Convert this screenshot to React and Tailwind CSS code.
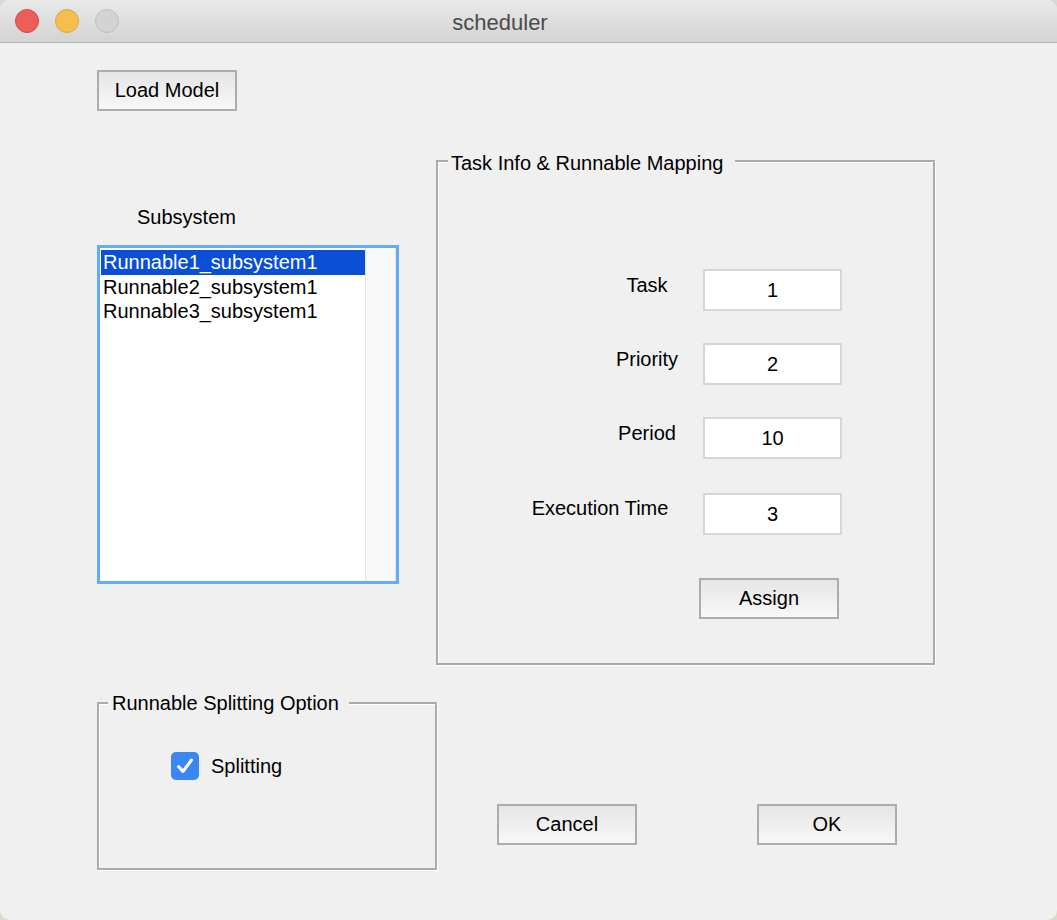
import React from "react";

const Btn = ({ children, className = "" }) => (
  <button
    className={`flex h-[41px] w-[140px] items-center justify-center border-2 border-[#acacac] bg-linear-to-b from-[#e5e5e5] to-[#f8f8f8] pb-[2px] text-[20px] leading-none text-black ${className}`}
  >
    {children}
  </button>
);

const Field = ({ value }) => (
  <div className="ml-[13px] flex h-[42px] w-[139px] items-center justify-center border-2 border-[#d6d6d6] bg-white pb-[1px] text-[20px] leading-none">
    {value}
  </div>
);

const rows = [
  { label: "Task", value: "1", box: "w-[86px] mt-[5px]", row: "mt-[96px]" },
  { label: "Priority", value: "2", box: "w-[86px] mt-[5px]", row: "mt-[32px]" },
  { label: "Period", value: "10", box: "w-[86px] mt-[5px]", row: "mt-[32px]" },
  { label: "Execution Time", value: "3", box: "w-[180px] mt-[4px]", row: "mt-[34px]" },
];

const items = ["Runnable1_subsystem1", "Runnable2_subsystem1", "Runnable3_subsystem1"];

export default function App() {
  return (
    <div className="min-h-screen bg-[#d9d9cd]">
      <div className="h-[920px] w-[1057px] overflow-hidden rounded-[10px] bg-[#f0f0f0] font-['Liberation_Sans',Arial,sans-serif] text-[20px] text-black">
        {/* title bar */}
        <div className="flex h-[43px] items-center border-b border-[#b2b2b2] bg-linear-to-b from-[#e9e9e9] to-[#d4d4d4]">
          <div className="flex w-[119px] items-center gap-[16px] pl-[15px]">
            <span className="h-6 w-6 rounded-full border border-[#d64a42] bg-[#ec5f58]" />
            <span className="h-6 w-6 rounded-full border border-[#daa53b] bg-[#f4bf4f]" />
            <span className="h-6 w-6 rounded-full border border-[#bdbdbd] bg-[#d3d3d3]" />
          </div>
          <div className="flex-1 pr-[176px] pt-[3px] text-center text-[22px] text-[#4b4b4b]">scheduler</div>
        </div>

        <div className="pl-[97px]">
          <Btn className="mt-[27px]">Load Model</Btn>

          <div className="flex">
            {/* left column */}
            <div className="w-[339px]">
              <div className="ml-[40px] mt-[95px] leading-[22px]">Subsystem</div>
              <div className="mt-[17px] flex h-[339px] w-[302px] border-[3px] border-[#62aef3] bg-white">
                <div className="flex-1 pl-[1px] pt-[2px]">
                  {items.map((t, i) => (
                    <div
                      key={t}
                      className={
                        i === 0
                          ? "bg-[#0b4fd7] pl-[2px] leading-[24.5px] text-white"
                          : "pl-[2px] leading-[24.5px]"
                      }
                    >
                      {t}
                    </div>
                  ))}
                </div>
                <div className="w-[31px] border-x border-[#e3e3e3] bg-[#f8f8f8]" />
              </div>

              <fieldset className="mt-[109px] h-[177px] w-[340px] border-2 border-[#ababab] shadow-[inset_1px_1px_0_#fff,1px_1px_0_#fff]">
                <legend className="ml-[9px] bg-[#f0f0f0] pl-[4px] pr-[10px] leading-[20px]">
                  Runnable Splitting Option
                </legend>
                <div className="ml-[72px] mt-[39px] flex items-center gap-[12px]">
                  <span className="flex h-[28px] w-[28px] items-center justify-center rounded-[5px] bg-[#3a87f4]">
                    <svg width="22" height="22" viewBox="0 0 22 22" fill="none">
                      <path d="M4.5 11.5l4.5 5 8.5-11.5" stroke="#fff" strokeWidth="3" strokeLinecap="round" strokeLinejoin="round" />
                    </svg>
                  </span>
                  <span className="leading-[22px]">Splitting</span>
                </div>
              </fieldset>
            </div>

            {/* right column */}
            <div className="w-[499px]">
              <fieldset className="mt-[38px] h-[516px] w-[499px] border-2 border-[#ababab] shadow-[inset_1px_1px_0_#fff,1px_1px_0_#fff]">
                <legend className="ml-[10px] bg-[#f0f0f0] pl-[3px] pr-[12px] pt-[4px] leading-[20px]">
                  Task Info &amp; Runnable Mapping
                </legend>
                {rows.map((r) => (
                  <div key={r.label} className={`flex ${r.row}`}>
                    <div className="flex w-[252px] justify-end">
                      <div className={`text-center leading-[22px] ${r.box}`}>{r.label}</div>
                    </div>
                    <Field value={r.value} />
                  </div>
                ))}
                <Btn className="ml-[261px] mt-[43px]">Assign</Btn>
              </fieldset>

              <div className="mt-[139px] flex">
                <Btn className="ml-[61px]">Cancel</Btn>
                <Btn className="ml-[120px]">OK</Btn>
              </div>
            </div>
          </div>
        </div>
      </div>
    </div>
  );
}
